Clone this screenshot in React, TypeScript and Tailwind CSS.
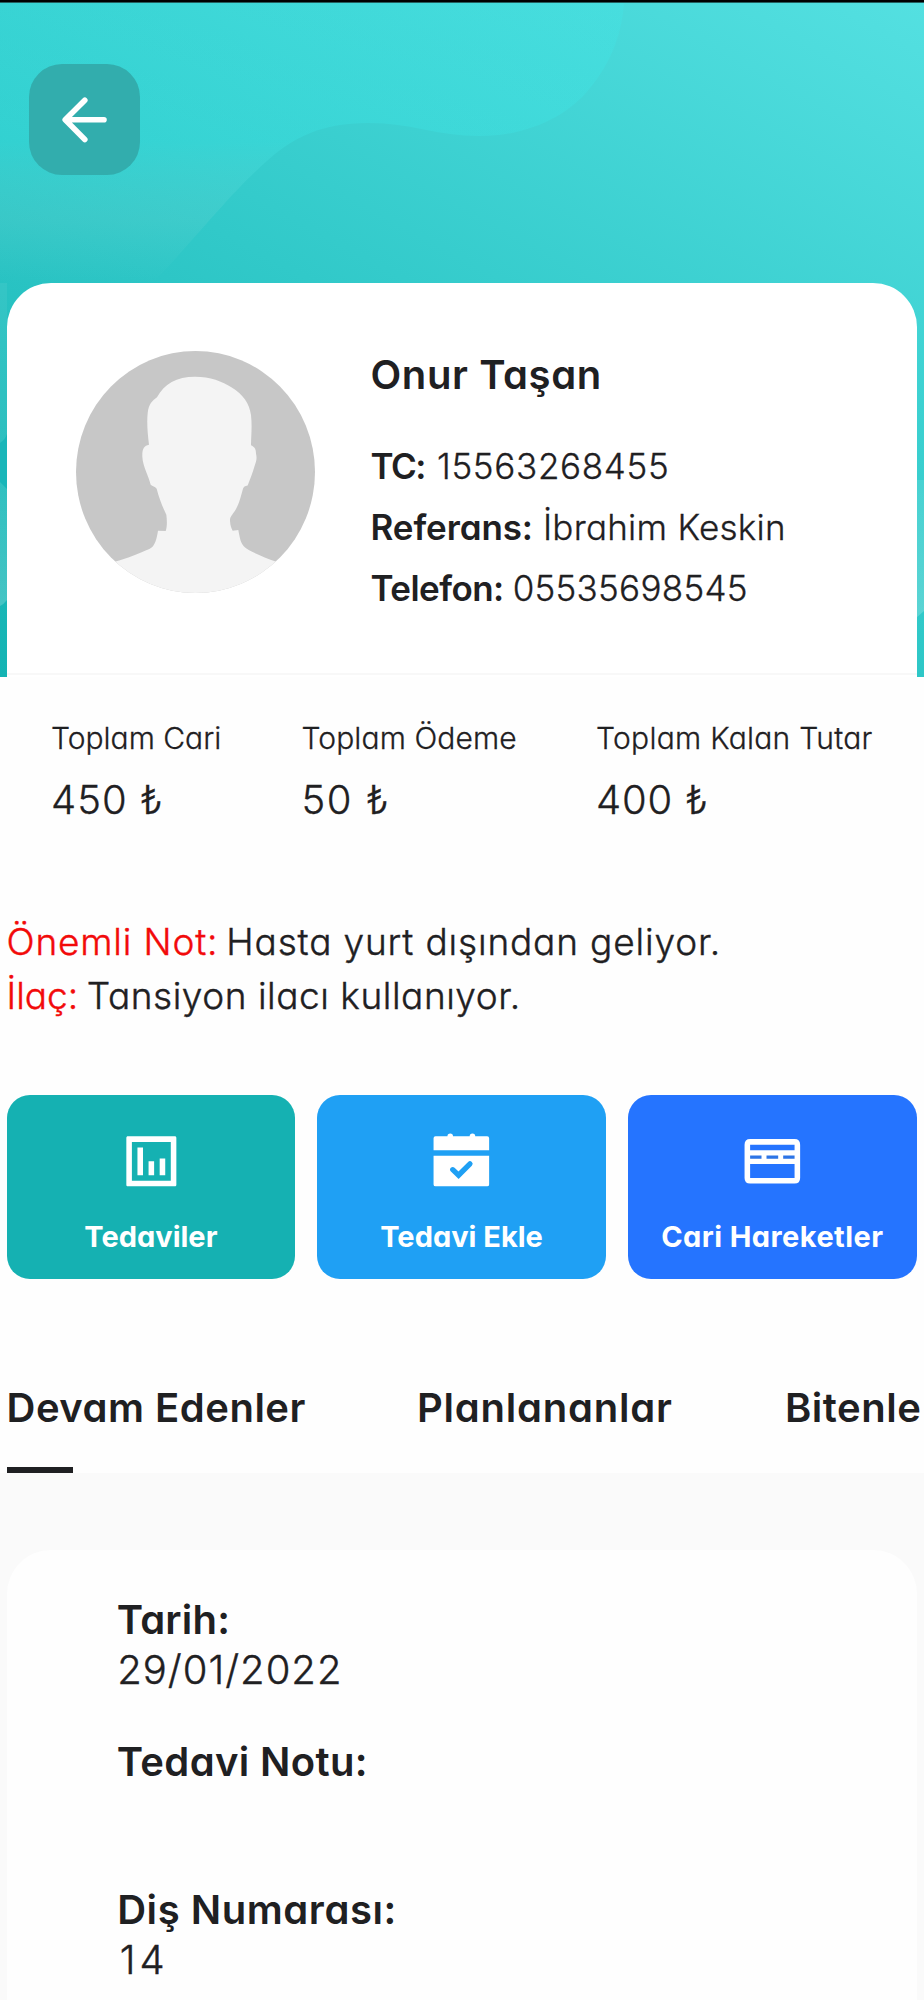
import React from "react";

type Tone = { label: string; value: string; labelClass: string; valueClass: string };

const identity: Tone[] = [
  { label: "TC:", value: "15563268455", labelClass: "mr-[12px] tracking-[-1.5px]", valueClass: "tracking-[0.67px]" },
  { label: "Referans:", value: "İbrahim Keskin", labelClass: "mr-[10px] tracking-[-0.1px]", valueClass: "tracking-[0.25px]" },
  { label: "Telefon:", value: "05535698545", labelClass: "mr-[9px] tracking-[-0.55px]", valueClass: "tracking-[0.26px]" },
];

const totals = [
  { label: "Toplam Cari", value: "450 ₺", box: "w-[250.5px]", labelClass: "tracking-[0px]", valueClass: "tracking-[1px]" },
  { label: "Toplam Ödeme", value: "50 ₺", box: "w-[294.5px]", labelClass: "tracking-[0.1px]", valueClass: "tracking-[1.5px]" },
  { label: "Toplam Kalan Tutar", value: "400 ₺", box: "flex-1", labelClass: "tracking-[0.27px]", valueClass: "tracking-[0.8px]" },
];

const notes: Tone[] = [
  { label: "Önemli Not:", value: "Hasta yurt dışından geliyor.", labelClass: "mr-[8px] tracking-[0.82px]", valueClass: "tracking-[0.84px]" },
  { label: "İlaç:", value: "Tansiyon ilacı kullanıyor.", labelClass: "mr-[8.5px]", valueClass: "tracking-[0.53px]" },
];

function HeaderArt() {
  return (
    <svg className="absolute inset-0 h-full w-full" viewBox="0 0 924 677" preserveAspectRatio="none" aria-hidden="true">
      <defs>
        <linearGradient id="sea" gradientUnits="userSpaceOnUse" x1="0" y1="677" x2="498" y2="-232">
          <stop offset="0" stopColor="#14b3b3" />
          <stop offset="0.48" stopColor="#31c9c9" />
          <stop offset="1" stopColor="#54e0e1" />
        </linearGradient>
        <linearGradient id="wave" x1="0" y1="0" x2="0" y2="283" gradientUnits="userSpaceOnUse">
          <stop offset="0" stopColor="#3deeee" stopOpacity="0.2" />
          <stop offset="0.5" stopColor="#3deeee" stopOpacity="0.24" />
          <stop offset="0.78" stopColor="#8cdcd8" stopOpacity="0.14" />
          <stop offset="1" stopColor="#8cdcd8" stopOpacity="0" />
        </linearGradient>
        <linearGradient id="glow" x1="0" y1="480" x2="0" y2="610" gradientUnits="userSpaceOnUse">
          <stop offset="0" stopColor="#ffffff" stopOpacity="0.08" />
          <stop offset="1" stopColor="#ffffff" stopOpacity="0.2" />
        </linearGradient>
      </defs>
      <rect width="924" height="677" fill="url(#sea)" />
      <path
        d="M0 0H624C623 30 612 62 590 88C568 116 528 136 480 136C436 136 412 123 368 123C322 123 294 137 268 160C228 196 210 222 153 283H0Z"
        fill="url(#wave)"
      />
      <path d="M0 283H7V440Q4 441 0 446Z" fill="#ffffff" fillOpacity="0.06" />
      <path d="M0 443Q5 440 7 434V489Q4 486 0 482Z" fill="#19b6b9" />
      <path d="M0 482Q4 486 7 489V600Q4 604 0 606Z" fill="url(#glow)" />
      <path d="M916 480H924V611L916 618Z" fill="url(#glow)" />
      <rect width="924" height="2" fill="#000" />
      <rect y="2" width="924" height="1" fill="#245f5f" />
    </svg>
  );
}

function Avatar() {
  return (
    <svg className="mt-[1px] h-[242px] w-[239px] shrink-0" viewBox="228 273 717 727" preserveAspectRatio="none" role="img">
      <defs>
        <clipPath id="disc">
          <ellipse cx="586.5" cy="636.5" rx="358.5" ry="363.5" />
        </clipPath>
      </defs>
      <g clipPath="url(#disc)">
        <rect x="228" y="273" width="717" height="727" fill="#c7c7c7" />
        <path
          fill="#f4f4f4"
          d="M344 906C380 897 420 880 448 868C466 860 470 836 474 813L497 814C502 800 501 780 499 765C490 745 478 720 470 687C464 679 458 681 452 675C446 648 428 620 427 590C426 568 432 558 447 555C443 520 440 490 443 460C446 430 458 422 471 412C492 372 530 350 585 350C630 350 668 364 694 382C730 404 748 430 753 465C757 500 753 530 753 556C766 562 768 570 768 582C772 596 768 606 764 618C758 640 750 658 743 677C734 679 732 680 729 687C722 712 718 730 708 748C698 766 689 770 690 784C691 798 694 806 698 813L715 811C720 838 722 850 732 860C746 874 790 892 829 906L900 1000H260Z"
        />
      </g>
    </svg>
  );
}

const iconClass = "h-[66.7px] w-[66.7px]";

function ChartIcon() {
  return (
    <svg className={iconClass} viewBox="0 0 24 24" fill="#fff">
      <path
        fillRule="evenodd"
        d="M3.6 3H20.4C20.8 3 21 3.2 21 3.6V20.4C21 20.8 20.8 21 20.4 21H3.6C3.2 21 3 20.8 3 20.4V3.6C3 3.2 3.2 3 3.6 3ZM5 5V19H19V5Z"
      />
      <path d="M7 7H9V17H7ZM11 12H13V17H11ZM15 11H17V17H15Z" />
    </svg>
  );
}

function CalendarIcon() {
  return (
    <svg className={iconClass} viewBox="0 0 24 24">
      <path
        fill="#fff"
        d="M2 8V3.7Q2 3 2.7 3H7Q7 2 8 2Q9 2 9 3H15Q15 2 16 2Q17 2 17 3H21.3Q22 3 22 3.7V8ZM2 10H22V20.3Q22 21 21.3 21H2.7Q2 21 2 20.3Z"
      />
      <path d="M8.9 15L11 17L15.1 12.9" fill="none" stroke="#1fa0f4" strokeWidth="1.9" strokeLinecap="round" />
    </svg>
  );
}

function CardIcon() {
  return (
    <svg className={iconClass} viewBox="0 0 24 24">
      <path
        fill="#fff"
        fillRule="evenodd"
        d="M4 4H20Q22 4 22 6V18Q22 20 20 20H4Q2 20 2 18V6Q2 4 4 4ZM4 6V8H20V6ZM4 13V18H20V13Z"
      />
      <path fill="#2c74e6" d="M4 9.9H8.1V11.1H4ZM9.9 9.9H14.1V11.1H9.9ZM15.9 9.9H20V11.1H15.9Z" />
    </svg>
  );
}

function Action({ icon, label, className }: { icon: React.ReactNode; label: string; className: string }) {
  return (
    <button className={"flex h-[183.5px] flex-1 flex-col items-center rounded-[23px] pt-[33.4px] text-white " + className}>
      {icon}
      <span className="mt-[24px] text-[29px] leading-[36px] font-bold whitespace-nowrap">{label}</span>
    </button>
  );
}

export default function App() {
  return (
    <div className="h-[2000px] w-[924px] overflow-hidden bg-[#fefefe] font-[Inter,'Noto_Sans',sans-serif] text-[#1f2022] [font-feature-settings:'cv11']">
      <header className="relative flex h-[677px] flex-col overflow-hidden pt-[64px]">
        <HeaderArt />
        <button className="relative ml-[29px] flex h-[111px] w-[111px] shrink-0 items-center justify-center rounded-[33px] bg-[#32adad]" aria-label="Geri">
          <svg className="h-[48px] w-[48px]" viewBox="0 0 48 48" fill="none" stroke="#fff" strokeWidth="5.6" strokeLinecap="round" strokeLinejoin="round">
            <path d="M23.8 4.3L4.2 23.8L23.8 43.5M4.6 23.8H43" />
          </svg>
        </button>
        <section className="relative mt-[108px] ml-[7px] flex h-[394px] w-[909.5px] shrink-0 rounded-t-[44px] bg-white pt-[67px] pl-[69px]">
          <Avatar />
          <div className="ml-[55.5px] whitespace-nowrap">
            <h1 className="text-[40px] leading-[50px] font-semibold tracking-[0.6px]">Onur Taşan</h1>
            <dl className="mt-[35.5px] text-[35px] leading-[61px]">
              {identity.map((row) => (
                <div key={row.label} className="flex">
                  <dt className={"font-semibold " + row.labelClass}>{row.label}</dt>
                  <dd className={"font-light [-webkit-text-stroke:0.3px] " + row.valueClass}>{row.value}</dd>
                </div>
              ))}
            </dl>
          </div>
          <div className="absolute inset-x-0 bottom-[2px] h-[2px] bg-[#f8f8f8]" />
        </section>
      </header>

      <section className="flex pt-[41px] pl-[51px] font-light whitespace-nowrap [-webkit-text-stroke:0.3px]">
        {totals.map((t) => (
          <div key={t.label} className={t.box}>
            <p className={"text-[30px] leading-[40px] " + t.labelClass}>{t.label}</p>
            <p className={"mt-[17px] text-[40px] leading-[50px] " + t.valueClass}>{t.value}</p>
          </div>
        ))}
      </section>

      <section className="mt-[90px] pl-[6.5px] text-[37px] leading-[53.5px] font-light whitespace-nowrap [-webkit-text-stroke:0.4px]">
        {notes.map((n) => (
          <p key={n.label} className="flex">
            <span className={"text-[#f20a0a] " + n.labelClass}>{n.label}</span>
            <span className={n.valueClass}>{n.value}</span>
          </p>
        ))}
      </section>

      <nav className="mt-[73px] flex gap-[22.3px] pr-[7.5px] pl-[6.7px]">
        <Action icon={<ChartIcon />} label="Tedaviler" className="bg-[#15b1b2]" />
        <Action icon={<CalendarIcon />} label="Tedavi Ekle" className="bg-[#1fa0f4]" />
        <Action icon={<CardIcon />} label="Cari Hareketler" className="bg-[#2574ff] tracking-[0.42px]" />
      </nav>

      <div className="mt-[104px] flex pl-[6.5px] text-[40px] leading-[50px] font-semibold whitespace-nowrap">
        <span className="w-[410.5px] shrink-0 tracking-[0.5px]">Devam Edenler</span>
        <span className="w-[368px] shrink-0 tracking-[0.77px]">Planlananlar</span>
        <span className="shrink-0 tracking-[0.5px]">Bitenle</span>
      </div>
      <div className="mt-[34.5px] ml-[6.5px] h-[6px] w-[66.5px] bg-[#1f2022]" />

      <main className="h-[600px] bg-[#fafafa] pt-[77px] pr-[7.5px] pl-[6.7px]">
        <article className="h-full rounded-t-[44px] bg-[#fefefe] pt-[45px] pl-[110px] text-[40px] leading-[50px] whitespace-nowrap">
          <h2 className="font-semibold tracking-[0.2px]">Tarih:</h2>
          <p className="pl-[0.5px] font-light tracking-[1px] [-webkit-text-stroke:0.4px]">29/01/2022</p>
          <h2 className="mt-[41.5px] font-semibold tracking-[0.35px]">Tedavi Notu:</h2>
          <h2 className="mt-[98px] pl-[0.5px] font-semibold tracking-[0.55px]">Diş Numarası:</h2>
          <p className="pl-[3px] font-light tracking-[4px] [-webkit-text-stroke:0.4px]">14</p>
        </article>
      </main>
    </div>
  );
}
